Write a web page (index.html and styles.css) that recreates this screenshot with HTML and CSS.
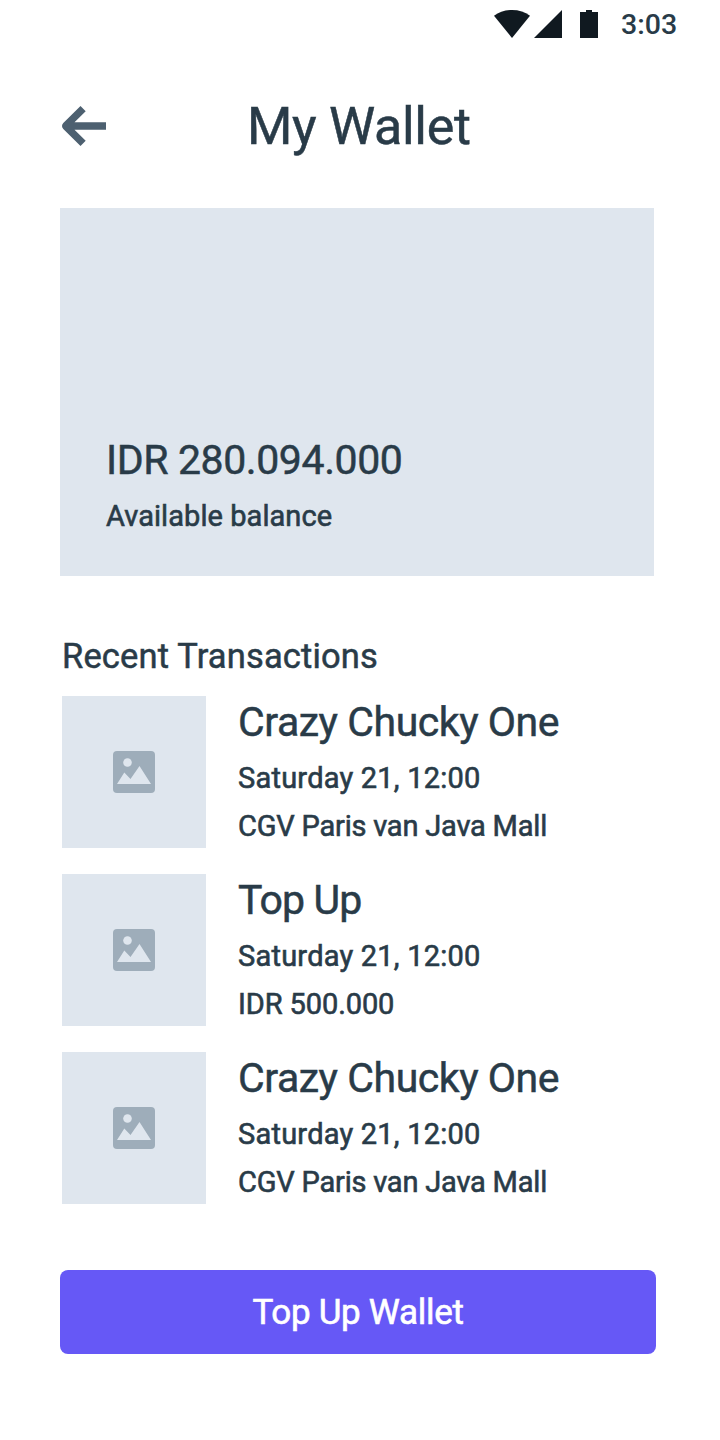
FILE: index.html
```html
<!DOCTYPE html>
<html lang="en">
<head>
<meta charset="utf-8">
<title>My Wallet</title>
<link rel="stylesheet" href="styles.css">
</head>
<body>
<svg class="defs" width="0" height="0" aria-hidden="true">
  <symbol id="image" viewBox="0 0 42 42">
    <rect width="42" height="42" rx="4" fill="#9eadba"/>
    <circle cx="14.500" cy="11.500" r="4.300" fill="#dfe6ee"/>
    <path d="M4 33 11.300 21.500 17.500 28 26.500 15 38 33Z" fill="#dfe6ee"/>
  </symbol>
</svg>
<div class="screen">
  <div class="status">
    <svg class="wifi" width="36" height="28" viewBox="0 0 36 28"><path d="M0 5.800C5 2 11 0 18 0s13 2 18 5.800L18 28Z" fill="#101920"/></svg>
    <svg class="signal" width="28" height="28" viewBox="0 0 28 28"><path d="M28 0V28H0Z" fill="#101920"/></svg>
    <svg class="battery" width="18" height="28" viewBox="0 0 18 28"><path d="M6 0h6v2h6v26H0V2h6Z" fill="#101920"/></svg>
    <span class="time">3:03</span>
  </div>
  <header class="header">
    <svg class="back" width="44" height="40" viewBox="0 0 44 40"><path d="M44 16.300H12.500L23.700 5.300 18.500 0 1.300 17Q-1.300 20 1.300 23L18.500 40 23.700 34.700 12.500 23.700H44Z" fill="#4d6070"/></svg>
    <h1 class="title">My Wallet</h1>
  </header>
  <section class="card">
    <div class="balance">IDR 280.094.000</div>
    <div class="caption">Available balance</div>
  </section>
  <h2 class="recent">Recent Transactions</h2>
  <div class="list">
    <article class="item">
      <div class="thumb"><svg width="42" height="42"><use href="#image"/></svg></div>
      <div class="info"><h3 class="name movie">Crazy Chucky One</h3><p class="line date">Saturday 21, 12:00</p><p class="line place">CGV Paris van Java Mall</p></div>
    </article>
    <article class="item">
      <div class="thumb"><svg width="42" height="42"><use href="#image"/></svg></div>
      <div class="info"><h3 class="name topup">Top Up</h3><p class="line date">Saturday 21, 12:00</p><p class="line amount">IDR 500.000</p></div>
    </article>
    <article class="item">
      <div class="thumb"><svg width="42" height="42"><use href="#image"/></svg></div>
      <div class="info"><h3 class="name movie">Crazy Chucky One</h3><p class="line date">Saturday 21, 12:00</p><p class="line place">CGV Paris van Java Mall</p></div>
    </article>
  </div>
  <button class="button" type="button">Top Up Wallet</button>
</div>
</body>
</html>
```
FILE: styles.css
```css
* { box-sizing: border-box; margin: 0; padding: 0; }
body { background: #fff; color: #293b48; font-family: Roboto, sans-serif; font-weight: 400; -webkit-text-stroke: 0.5px currentColor; }
h1, h2, h3 { font-weight: 400; }
svg { display: block; flex: none; }
.defs { position: absolute; }
.screen { width: 720px; height: 1440px; padding: 0 60px; white-space: nowrap; overflow: hidden; }
.status { display: flex; align-items: center; height: 48px; padding-left: 434px; }
.signal { margin-left: 4px; }
.battery { margin-left: 18px; }
.time { margin-left: 23px; padding-top: 2px; font-size: 28.5px; line-height: 48px; font-weight: 500; -webkit-text-stroke: 0; }
.header { display: flex; align-items: center; height: 156px; padding-left: 2px; }
.title { margin-left: 141px; padding-top: 2px; font-size: 52px; line-height: 60px; letter-spacing: -0.3px; }
.card { display: flex; flex-direction: column; justify-content: flex-end; gap: 12px; width: 594px; height: 368px; margin-top: 4px; padding: 0 46px 40px; background: #dfe6ee; }
.balance { font-size: 41px; line-height: 48px; letter-spacing: -0.4px; }
.caption { font-size: 29px; line-height: 40px; letter-spacing: 0.06px; }
.recent { margin: 60px 0 20px 2px; font-size: 34.5px; line-height: 40px; letter-spacing: 0.15px; }
.list { display: flex; flex-direction: column; gap: 26px; padding-left: 2px; }
.item { display: flex; gap: 32px; height: 152px; }
.thumb { display: flex; flex: none; align-items: center; justify-content: center; width: 144px; background: #dfe6ee; }
.info { display: flex; flex-direction: column; align-items: flex-start; gap: 4px; padding-top: 2px; }
.name { margin-bottom: 6px; font-size: 41px; line-height: 48px; }
.movie { letter-spacing: -0.45px; }
.topup { letter-spacing: -0.9px; }
.line { font-size: 29px; line-height: 44px; }
.caption, .line { -webkit-text-stroke-width: 0.6px; }
.date { letter-spacing: 0.22px; }
.place { letter-spacing: -0.2px; }
.amount { letter-spacing: -0.1px; }
.button { display: block; width: 596px; height: 84px; margin-top: 66px; padding-top: 2px; border: 0; border-radius: 8px; background: #6658f6; color: #fff; font: 400 35px/82px Roboto, sans-serif; letter-spacing: -0.3px; text-align: center; -webkit-text-stroke: 0.6px currentColor; }
```
